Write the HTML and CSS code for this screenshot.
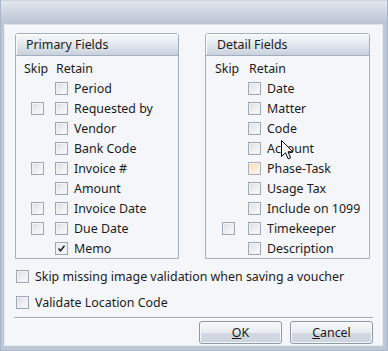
FILE: index.html
```html
<!DOCTYPE html>
<html>
<head>
<meta charset="utf-8">
<link rel="stylesheet" href="styles.css">
</head>
<body>
<div class="window">
  <div class="titlebar"></div>
  <div class="client">
    <div class="groups">
      <div class="group primary">
        <div class="group-head">Primary Fields</div>
        <div class="group-body">
          <div class="row"><span class="col-skip">Skip</span><span class="col-retain">Retain</span></div>
          <div class="row"><span class="col-skip"></span><span class="cb"></span><span class="lbl">Period</span></div>
          <div class="row"><span class="col-skip"><span class="cb"></span></span><span class="cb"></span><span class="lbl">Requested by</span></div>
          <div class="row"><span class="col-skip"></span><span class="cb"></span><span class="lbl">Vendor</span></div>
          <div class="row"><span class="col-skip"></span><span class="cb"></span><span class="lbl">Bank Code</span></div>
          <div class="row"><span class="col-skip"><span class="cb"></span></span><span class="cb"></span><span class="lbl">Invoice #</span></div>
          <div class="row"><span class="col-skip"></span><span class="cb"></span><span class="lbl">Amount</span></div>
          <div class="row"><span class="col-skip"><span class="cb"></span></span><span class="cb"></span><span class="lbl">Invoice Date</span></div>
          <div class="row"><span class="col-skip"><span class="cb"></span></span><span class="cb"></span><span class="lbl">Due Date</span></div>
          <div class="row"><span class="col-skip"></span><span class="cb checked"><svg width="11" height="11" viewBox="0 0 11 11"><path d="M2.5 5.5 L4.5 7.8 L8.5 2.8" fill="none" stroke="#1a1a1a" stroke-width="1.4"/></svg></span><span class="lbl">Memo</span></div>
        </div>
      </div>
      <div class="group detail">
        <div class="group-head">Detail Fields</div>
        <div class="group-body">
          <div class="row"><span class="col-skip">Skip</span><span class="col-retain">Retain</span></div>
          <div class="row"><span class="col-skip"></span><span class="cb"></span><span class="lbl">Date</span></div>
          <div class="row"><span class="col-skip"></span><span class="cb"></span><span class="lbl">Matter</span></div>
          <div class="row"><span class="col-skip"></span><span class="cb"></span><span class="lbl">Code</span></div>
          <div class="row"><span class="col-skip"></span><span class="cb"></span><span class="lbl">Account</span></div>
          <div class="row"><span class="col-skip"></span><span class="cb hover"></span><span class="lbl">Phase-Task</span></div>
          <div class="row"><span class="col-skip"></span><span class="cb"></span><span class="lbl">Usage Tax</span></div>
          <div class="row"><span class="col-skip"></span><span class="cb"></span><span class="lbl">Include on 1099</span></div>
          <div class="row"><span class="col-skip"><span class="cb"></span></span><span class="cb"></span><span class="lbl">Timekeeper</span></div>
          <div class="row"><span class="col-skip"></span><span class="cb"></span><span class="lbl">Description</span></div>
        </div>
      </div>
    </div>
    <div class="option first"><span class="cb"></span><span class="lbl">Skip missing image validation when saving a voucher</span></div>
    <div class="option"><span class="cb"></span><span class="lbl">Validate Location Code</span></div>
    <div class="separator"></div>
    <div class="buttons">
      <div class="btn"><u>O</u>K</div>
      <div class="btn"><u>C</u>ancel</div>
    </div>
  </div>
  <svg class="cursor" width="13" height="20" viewBox="0 0 13 20">
    <path d="M0.5 0.5 L0.5 16.5 L4.5 12.8 L7.2 18.8 L9.6 17.8 L7 11.8 L12 11.8 Z" fill="#fff" stroke="#000" stroke-width="1" stroke-linejoin="miter"/>
  </svg>
</div>
</body>
</html>
```
FILE: styles.css
```css
html, body {
  margin: 0;
  padding: 0;
}
body {
  font-family: "Noto Sans", "Open Sans", sans-serif;
  font-size: 12.4px;
  color: #1b1b1b;
}
.window {
  position: relative;
  width: 388px;
  height: 351px;
  display: flex;
  flex-direction: column;
  background: #bdc7d5;
  box-sizing: border-box;
  border-left: 1px solid #aab5c5;
  border-right: 1px solid #aab5c5;
  border-bottom: 1px solid #aab5c5;
}
.titlebar {
  height: 24px;
  flex: none;
  background: linear-gradient(#e2e7ee, #c9d1dd 60%, #bac4d3);
  border-top: 1px solid #ccd4df;
  box-sizing: border-box;
}
.client {
  flex: 1;
  margin: 0 4px 5px 3px;
  background: #f4f6f9;
  border: 1px solid #e8ecf1;
  border-top-color: #dfe4eb;
  padding: 8px 9px 1px 10px;
  display: flex;
  flex-direction: column;
}
.groups {
  display: flex;
  gap: 26px;
}
.group {
  border: 1px solid #a3afc1;
  border-radius: 3px 3px 0 0;
  background: #f4f6f9;
}
.primary { width: 162px; }
.detail { width: 163px; }
.group-head {
  height: 21px;
  line-height: 21px;
  border-bottom: 1px solid #a3afc1;
  border-radius: 2px 2px 0 0;
  background: linear-gradient(#f6f8fa, #e3e8ee 50%, #c9d1dc);
  box-shadow: inset 1px 1px 0 #ffffff;
}
.primary .group-head { padding-left: 10px; }
.detail .group-head { padding-left: 11px; }
.group-body {
  padding-top: 2px;
}
.primary .group-body { padding-left: 8px; }
.detail .group-body { padding-left: 9px; }
.row {
  height: 20px;
  display: flex;
  align-items: center;
}
.primary .col-skip { width: 31px; }
.detail .col-skip { width: 33px; }
.col-skip {
  flex: none;
  display: flex;
  align-items: center;
}
.col-skip .cb { margin-left: 7px; }
.col-retain { margin-left: 1px; }
.cb {
  flex: none;
  width: 13px;
  height: 13px;
  box-sizing: border-box;
  border: 1px solid #9ea7b4;
  background: linear-gradient(135deg, #d9dde2, #f3f4f6 70%, #fbfbfc);
  box-shadow: inset 0 0 0 1px #f0f2f5;
  display: flex;
  align-items: center;
  justify-content: center;
}
.cb.checked {
  background: linear-gradient(135deg, #e4e7eb, #fafbfc);
}
.cb.hover {
  border-color: #a9b0bb;
  background: linear-gradient(135deg, #fbd9a8, #fdeed8 60%, #fff8ee);
}
.lbl {
  margin-left: 6px;
  white-space: nowrap;
}
.option {
  height: 20px;
  display: flex;
  align-items: center;
  margin-left: 1px;
  margin-top: 6px;
}
.option.first { margin-top: 7px; }
.separator {
  height: 1px;
  background: #a3acba;
  margin: 5px 0 0 -1px;
  box-shadow: 0 1px 0 #ffffff;
}
.buttons {
  display: flex;
  justify-content: flex-end;
  gap: 8px;
  margin-top: 3px;
}
.btn {
  width: 83px;
  height: 23px;
  box-sizing: border-box;
  border: 1px solid #8e99aa;
  border-radius: 3px;
  background: linear-gradient(#f7f8fa, #e7ebf0 50%, #d3d9e2 52%, #cdd4de);
  box-shadow: inset 0 0 0 1px #f5f7fa;
  display: flex;
  align-items: center;
  justify-content: center;
}
.btn u {
  text-decoration: underline;
}
.cursor {
  position: absolute;
  left: 280px;
  top: 140px;
}
```
